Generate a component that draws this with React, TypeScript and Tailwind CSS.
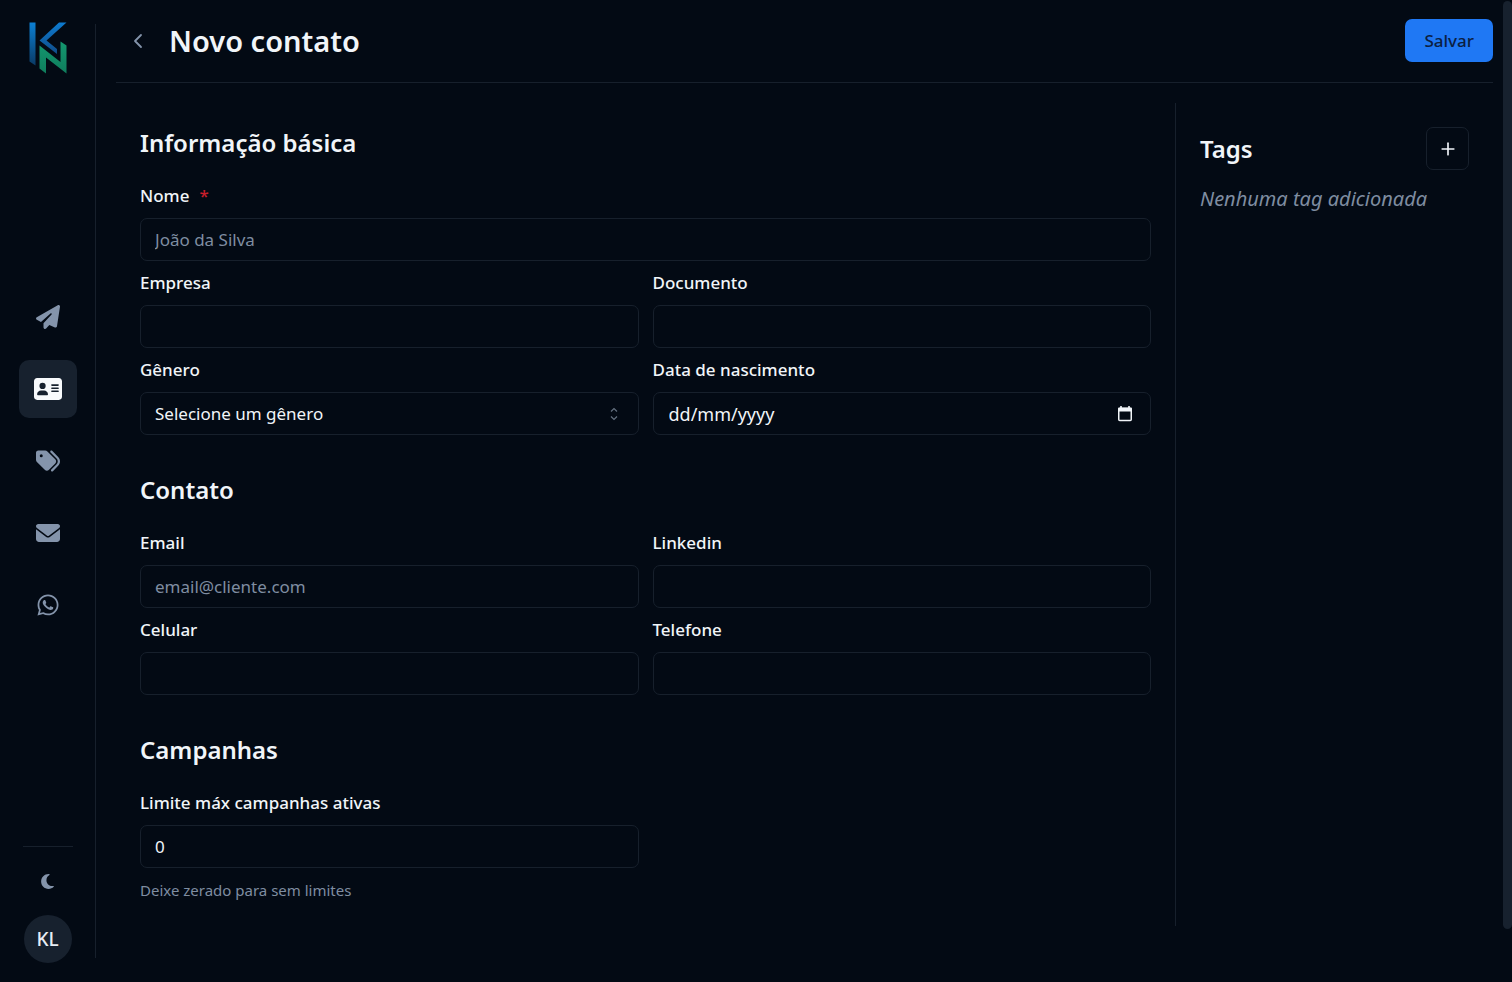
import type { ComponentPropsWithoutRef, ReactNode } from 'react';
import {
  FaAddressCard,
  FaEnvelope,
  FaMoon,
  FaPaperPlane,
  FaTags,
  FaWhatsapp,
} from 'react-icons/fa6';
import { ChevronLeft, Plus } from 'lucide-react';

const control =
  'h-[43px] w-full rounded-[7px] border border-[#17202c] bg-transparent px-[14px] text-[17px] text-[#f1f5f9] outline-none placeholder:text-[#7f8da1] focus:border-[#1f78f4]';

const navItems = [
  { label: 'Envios', icon: <FaPaperPlane size={24} /> },
  { label: 'Contatos', icon: <FaAddressCard size={28} />, active: true },
  { label: 'Tags', icon: <FaTags size={24} /> },
  { label: 'Emails', icon: <FaEnvelope size={24} /> },
  { label: 'WhatsApp', icon: <FaWhatsapp size={24} /> },
];

function Logo() {
  return (
    <svg width="38" height="52" viewBox="0 0 38 52" aria-label="KN" role="img">
      <defs>
        <linearGradient id="bar" x1="0" y1="0" x2="0" y2="1">
          <stop offset="0" stopColor="#0c80d4" />
          <stop offset="1" stopColor="#0a3a64" />
        </linearGradient>
        <linearGradient id="arm" x1="0" y1="0" x2="0" y2="1">
          <stop offset="0" stopColor="#0d7bd0" />
          <stop offset="1" stopColor="#104c88" />
        </linearGradient>
        <linearGradient id="enn" x1="0" y1="0" x2="0" y2="1">
          <stop offset="0" stopColor="#149870" />
          <stop offset="1" stopColor="#0f7c5c" />
        </linearGradient>
      </defs>
      <path d="M0.5 0.5H6.5V43.5L0.5 39.5Z" fill="url(#bar)" />
      <path d="M30 0.5H37.5L17.500 18.500L28 27V32L10.500 18.500Z" fill="url(#arm)" />
      <path d="M10.500 23.500L31.500 40V19.500L37.500 23.500V51.500L17 35.500V51.500L10.500 46.500Z" fill="url(#enn)" />
    </svg>
  );
}

function Sidebar() {
  return (
    <aside className="sticky top-0 flex h-screen w-24 shrink-0 py-6">
      <div className="flex flex-1 flex-col items-center">
        <a href="#inicio" className="-mt-1 flex h-14 items-center">
          <Logo />
        </a>
        <nav className="flex flex-1 flex-col items-center justify-center gap-[14px]">
          {navItems.map((item) => (
            <a
              key={item.label}
              href={`#${item.label.toLowerCase()}`}
              aria-label={item.label}
              className={
                item.active
                  ? 'flex size-[58px] items-center justify-center rounded-[10px] bg-[#17212e] text-[#f8fafc]'
                  : 'flex size-[58px] items-center justify-center rounded-[10px] text-[#8494ab]'
              }
            >
              {item.icon}
            </a>
          ))}
        </nav>
        <div className="-mb-[5px] flex flex-col items-center border-t border-[#17202c]">
          <button type="button" aria-label="Alternar tema" className="flex h-[68px] w-[50px] items-center justify-center text-[#8494ab]">
            <FaMoon size={17} />
          </button>
          <button type="button" className="size-12 rounded-full bg-[#17212e] text-[19px] font-medium text-[#e8edf4]">
            KL
          </button>
        </div>
      </div>
      <div className="w-px bg-[#17202c]" />
    </aside>
  );
}

function Section({ title, children }: { title: string; children: ReactNode }) {
  return (
    <section className="flex flex-col gap-[26px]">
      <h2 className="text-2xl leading-[31px] font-semibold">{title}</h2>
      <div className="grid grid-cols-2 gap-x-[14px] gap-y-[10px]">{children}</div>
    </section>
  );
}

function Field({
  id,
  label,
  required,
  wide,
  children,
}: {
  id: string;
  label: string;
  required?: boolean;
  wide?: boolean;
  children: ReactNode;
}) {
  return (
    <div className={wide ? 'col-span-2 flex flex-col gap-[10px]' : 'flex flex-col gap-[10px]'}>
      <label htmlFor={id} className="flex gap-[10px] text-[17px] leading-6 font-medium">
        {label}
        {required && <span className="text-[#c81e2b]">*</span>}
      </label>
      {children}
    </div>
  );
}

function TextField({
  id,
  label,
  required,
  wide,
  ...input
}: { id: string; label: string; required?: boolean; wide?: boolean } & ComponentPropsWithoutRef<'input'>) {
  return (
    <Field id={id} label={label} required={required} wide={wide}>
      <input id={id} name={id} required={required} className={control} {...input} />
    </Field>
  );
}

function CaretSort() {
  return (
    <svg width="18" height="18" viewBox="0 0 18 18" fill="none" stroke="#64707f" strokeWidth="1.2" className="pointer-events-none absolute right-4">
      <path d="M6 6.500L9 3.500L12 6.500M6 11.500L9 14.500L12 11.500" />
    </svg>
  );
}

function CalendarIcon() {
  return (
    <svg width="16" height="18" viewBox="0 0 16 18" fill="none">
      <path d="M4 1V4M12 1V4" stroke="currentColor" strokeWidth="1.600" />
      <path d="M1 3.500Q1 2.500 2 2.500H14Q15 2.500 15 3.500V6.500H1Z" fill="currentColor" />
      <rect x="1.750" y="3.500" width="12.500" height="12" rx="1" stroke="currentColor" strokeWidth="1.500" />
    </svg>
  );
}

export default function App() {
  return (
    <div className="flex min-h-screen bg-[#030a14] font-['Noto_Sans',sans-serif] text-[#f1f5f9]">
      <Sidebar />
      <main className="min-w-0 flex-1 pr-[19px] pl-5">
        <header className="flex items-center justify-between border-b border-[#17202c] pt-[19px] pb-5">
          <div className="flex items-center">
            <a href="#contatos" aria-label="Voltar" className="flex size-[43px] items-center justify-center text-[#8494ab]">
              <ChevronLeft size={24} strokeWidth={1.8} />
            </a>
            <h1 className="ml-[10px] text-[29px] leading-[43px] font-semibold">Novo contato</h1>
          </div>
          <button type="submit" form="contato" className="h-[43px] rounded-[7px] bg-[#1f78f4] px-[19px] text-[17px] font-medium text-[#0b2042]">
            Salvar
          </button>
        </header>
        <div className="mt-5 flex">
          <form id="contato" className="flex min-w-0 flex-1 flex-col gap-[39px] p-6">
            <Section title="Informação básica">
              <TextField id="nome" label="Nome" required wide placeholder="João da Silva" />
              <TextField id="empresa" label="Empresa" />
              <TextField id="documento" label="Documento" />
              <Field id="genero" label="Gênero">
                <div className="relative flex items-center">
                  <select id="genero" name="genero" className={`${control} appearance-none`}>
                    <option>Selecione um gênero</option>
                  </select>
                  <CaretSort />
                </div>
              </Field>
              <Field id="nascimento" label="Data de nascimento">
                <div className="relative flex items-center">
                  <input
                    id="nascimento"
                    name="nascimento"
                    inputMode="numeric"
                    placeholder="dd/mm/yyyy"
                    className="h-[43px] w-full rounded-[7px] border border-[#17202c] bg-transparent px-[15px] text-lg outline-none placeholder:text-[#f1f5f9]"
                  />
                  <button type="button" aria-label="Abrir calendário" className="absolute right-[18px]">
                    <CalendarIcon />
                  </button>
                </div>
              </Field>
            </Section>
            <Section title="Contato">
              <TextField id="email" label="Email" type="email" placeholder="email@cliente.com" />
              <TextField id="linkedin" label="Linkedin" />
              <TextField id="celular" label="Celular" type="tel" />
              <TextField id="telefone" label="Telefone" type="tel" />
            </Section>
            <Section title="Campanhas">
              <Field id="limite" label="Limite máx campanhas ativas">
                <input id="limite" name="limite" type="number" defaultValue={0} aria-describedby="limite-ajuda" className={control} />
                <p id="limite-ajuda" className="text-[15px] leading-6 text-[#7f8da1]">
                  Deixe zerado para sem limites
                </p>
              </Field>
            </Section>
          </form>
          <aside className="w-[318px] shrink-0 border-l border-[#17202c] p-6">
            <div className="flex items-center justify-between">
              <h2 className="text-2xl leading-[31px] font-semibold">Tags</h2>
              <button type="button" aria-label="Adicionar tag" className="flex size-[43px] items-center justify-center rounded-[7px] border border-[#17202c]">
                <Plus size={20} />
              </button>
            </div>
            <p className="mt-4 text-xl leading-[26px] text-[#7f8da1] italic">Nenhuma tag adicionada</p>
          </aside>
        </div>
      </main>
      <div aria-hidden="true" className="fixed top-px right-0 h-[94.5%] w-[9px] rounded-full bg-[#17212e]" />
    </div>
  );
}
